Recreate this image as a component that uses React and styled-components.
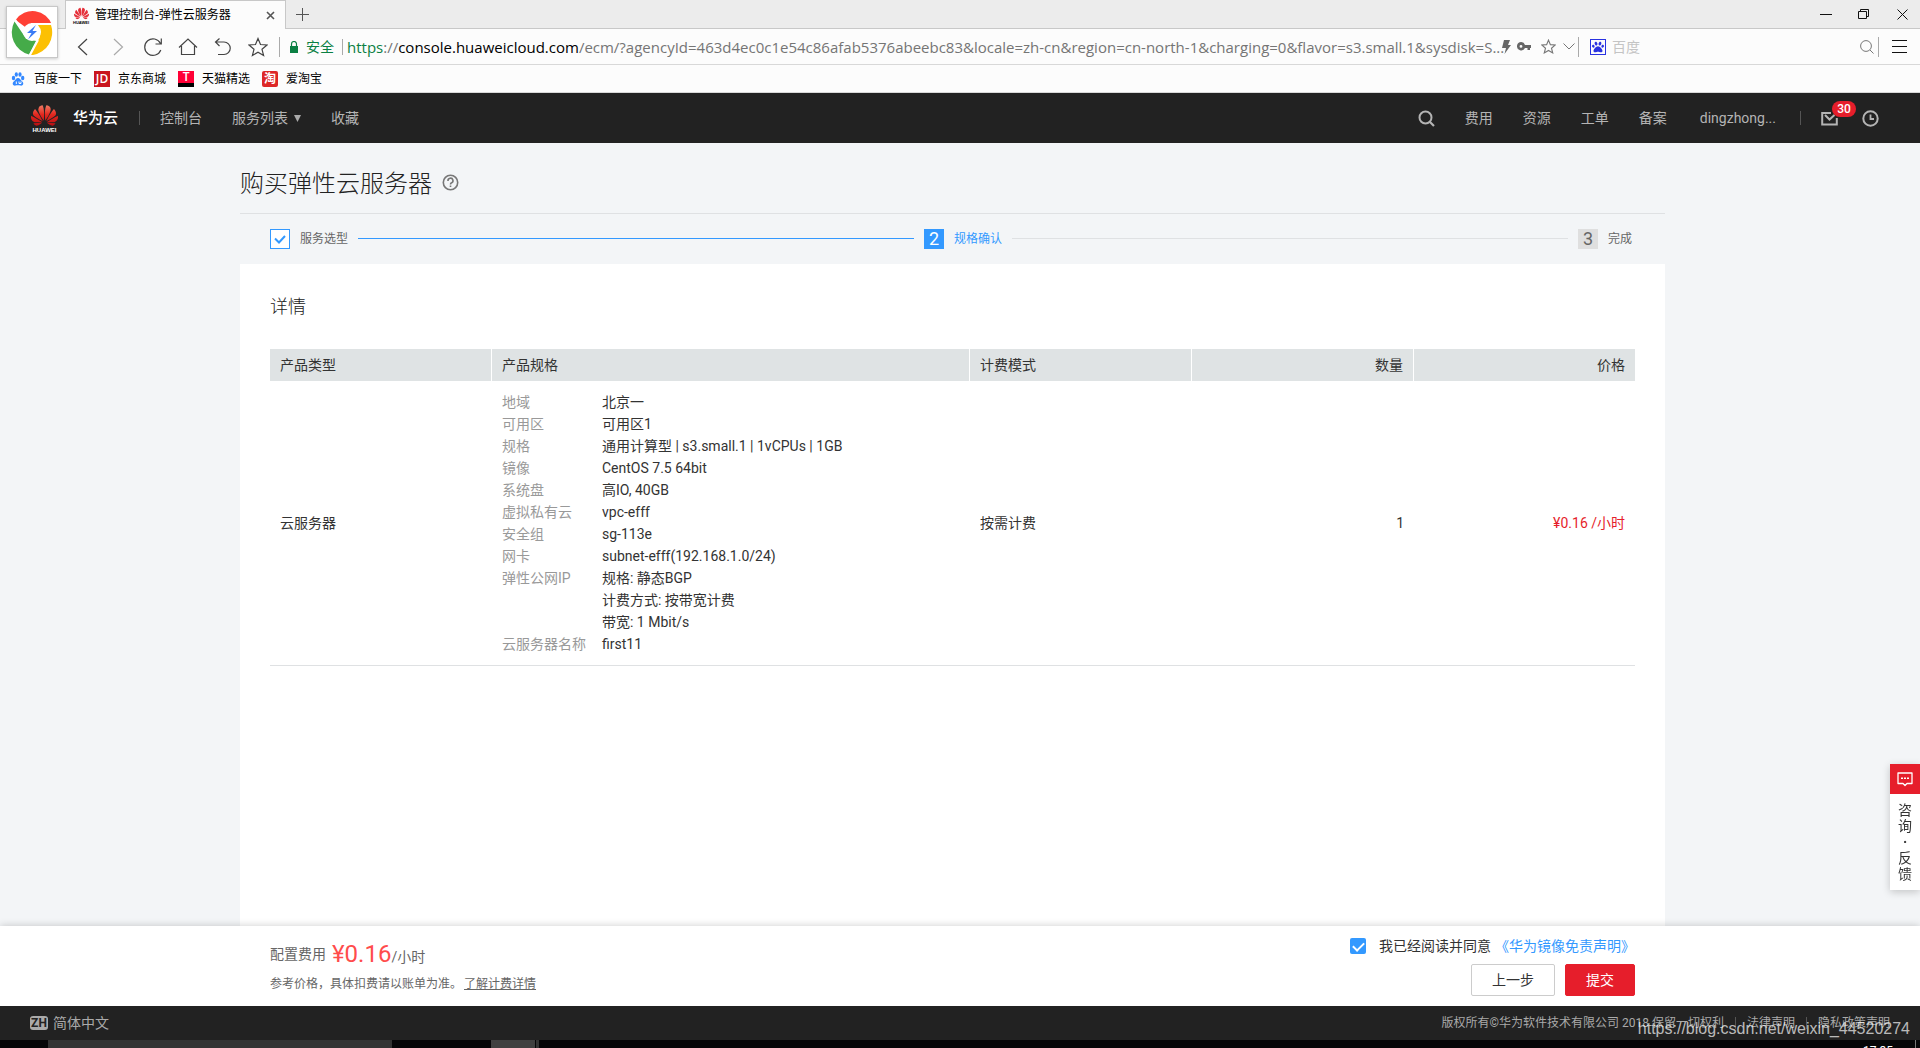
import styled, { createGlobalStyle } from 'styled-components'
import { SiHuawei } from 'react-icons/si'
import { FaPaw } from 'react-icons/fa'

const specs = [
  { name: '地域', value: '北京一' },
  { name: '可用区', value: '可用区1' },
  { name: '规格', value: '通用计算型 | s3.small.1 | 1vCPUs | 1GB' },
  { name: '镜像', value: 'CentOS 7.5 64bit' },
  { name: '系统盘', value: '高IO, 40GB' },
  { name: '虚拟私有云', value: 'vpc-efff' },
  { name: '安全组', value: 'sg-113e' },
  { name: '网卡', value: 'subnet-efff(192.168.1.0/24)' },
  { name: '弹性公网IP', value: '规格: 静态BGP' },
  { name: '', value: '计费方式: 按带宽计费' },
  { name: '', value: '带宽: 1 Mbit/s' },
  { name: '云服务器名称', value: 'first11' },
]

const BrowserLogo = () => (
  <LogoBox>
    <svg width="46" height="46" viewBox="0 0 46 46">
      <path d="M23 23 L6.6 11 A20.5 20.5 0 0 1 43 16 L23 16 Z" fill="#ff4035" />
      <path d="M42 16 A23 23 0 0 1 24 46 L21 46 L31 28 L29 16 Z" fill="#fcc003" />
      <path d="M5.5 12.500 A23 23 0 0 0 20 45.600 L27 32 L16 28 Z" fill="#45ab49" />
      <path d="M22 15 L43.500 15 M16 25 L6 10.500 M29 31 L21 46" stroke="#fff" strokeWidth="2" />
      <circle cx="23" cy="23" r="9" fill="#fff" />
      <path d="M27 16 L18 24 h4.500 L19 30.500 L28 22 h-4.500 Z" fill="#3b7bf5" />
    </svg>
  </LogoBox>
)

const BrowserBar = () => (
  <Browser>
    <TabStrip>
      <Tab>
        <Favicon>
          <SiHuawei size={15} color="#e5303a" />
          <small>HUAWEI</small>
        </Favicon>
        <TabTitle>管理控制台-弹性云服务器</TabTitle>
        <IconButton $w={16} aria-label="close tab">
          <svg width="9" height="9" viewBox="0 0 9 9"><path d="M1 1 L8 8 M8 1 L1 8" stroke="#555" strokeWidth="1.600" /></svg>
        </IconButton>
      </Tab>
      <IconButton $w={32} aria-label="new tab">
        <svg width="13" height="13" viewBox="0 0 13 13"><path d="M6.500 0 V13 M0 6.500 H13" stroke="#555" /></svg>
      </IconButton>
      <WindowButtons>
        <IconButton $w={36} aria-label="minimize">
          <svg width="12" height="12" viewBox="0 0 12 12"><path d="M0 6.500 H12" stroke="#111" /></svg>
        </IconButton>
        <IconButton $w={40} aria-label="restore">
          <svg width="12" height="12" viewBox="0 0 12 12"><path d="M.5 3.500 H8.500 V10.500 H.5 Z M2.500 3.500 V1.500 H10.500 V8.500 H8.500" fill="none" stroke="#111" /></svg>
        </IconButton>
        <IconButton $w={36} aria-label="close">
          <svg width="11" height="11" viewBox="0 0 11 11"><path d="M.5 .5 L10.500 10.500 M10.500 .5 L.5 10.500" stroke="#111" /></svg>
        </IconButton>
      </WindowButtons>
    </TabStrip>
    <Toolbar>
      <NavButtons>
        <IconButton $w={35} aria-label="back">
          <svg width="20" height="20" viewBox="0 0 20 20"><path d="M14 2 L5.500 10 L14 18" fill="none" stroke="#444" strokeWidth="1.200" /></svg>
        </IconButton>
        <IconButton $w={35} aria-label="forward">
          <svg width="20" height="20" viewBox="0 0 20 20"><path d="M6 2 L14.500 10 L6 18" fill="none" stroke="#aaa" strokeWidth="1.200" /></svg>
        </IconButton>
        <IconButton $w={35} aria-label="reload">
          <svg width="20" height="20" viewBox="0 0 20 20"><path d="M17.800 13 A8.300 8.300 0 1 1 17.500 6.500 M18.300 1.500 V7 H12.500" fill="none" stroke="#444" strokeWidth="1.200" /></svg>
        </IconButton>
        <IconButton $w={35} aria-label="home">
          <svg width="20" height="20" viewBox="0 0 20 20"><path d="M1 10.500 L10 2 L19 10.500 M3.500 9 V17.500 H16.500 V9" fill="none" stroke="#444" strokeWidth="1.200" /></svg>
        </IconButton>
        <IconButton $w={35} aria-label="undo">
          <svg width="20" height="20" viewBox="0 0 20 20"><path d="M6.500 1.500 L2.500 5 L6.500 9 M2.500 5 H11 A6 6 0 0 1 11 17.500 H5" fill="none" stroke="#444" strokeWidth="1.200" /></svg>
        </IconButton>
        <IconButton $w={35} aria-label="favorite">
          <svg width="20" height="20" viewBox="0 0 20 20"><path d="M10 1.500 L12.500 7.500 L19 8 L14 12.300 L15.600 18.500 L10 15.200 L4.400 18.500 L6 12.300 L1 8 L7.500 7.500 Z" fill="none" stroke="#444" strokeWidth="1.200" /></svg>
        </IconButton>
      </NavButtons>
      <Divider $h={20} />
      <Secure>
        <svg width="8" height="12" viewBox="0 0 8 12"><path d="M0 5 H8 V12 H0 Z" fill="#0b8043" /><path d="M1.500 5.500 V3 A2.500 2.500 0 0 1 6.500 3 V5.500" fill="none" stroke="#0b8043" strokeWidth="1.200" /></svg>
        安全
      </Secure>
      <Divider $h={16} />
      <Address>
        <b>https</b>://<i>console.huaweicloud.com</i>/ecm/?agencyId=463d4ec0c1e54c86afab5376abeebc83&amp;locale=zh-cn&amp;region=cn-north-1&amp;charging=0&amp;flavor=s3.small.1&amp;sysdisk=S...
      </Address>
      <IconButton $w={12} aria-label="speed mode">
        <svg width="9" height="14" viewBox="0 0 9 14"><path d="M2 0 H8 L6 5 H9 L2.500 14 L4 8 H0 Z" fill="#666" /></svg>
      </IconButton>
      <IconButton $w={24} aria-label="passwords">
        <svg width="14" height="9" viewBox="0 0 14 9"><path d="M4.200 0 A4.200 4.200 0 1 0 8 6 H10.500 V8 H13 V6 H14 V3 H8 A4.200 4.200 0 0 0 4.200 0 Z M4 3 A1.300 1.300 0 1 1 4 5.800 A1.300 1.300 0 1 1 4 3 Z" fill="#666" fillRule="evenodd" /></svg>
      </IconButton>
      <IconButton $w={24} aria-label="add bookmark">
        <svg width="15" height="15" viewBox="0 0 20 20"><path d="M10 1.500 L12.500 7.500 L19 8 L14 12.300 L15.600 18.500 L10 15.200 L4.400 18.500 L6 12.300 L1 8 L7.500 7.500 Z" fill="none" stroke="#777" strokeWidth="1.500" /></svg>
      </IconButton>
      <IconButton $w={18} aria-label="show history">
        <svg width="12" height="7" viewBox="0 0 12 7"><path d="M.5 .5 L6 6 L11.500 .5" fill="none" stroke="#777" /></svg>
      </IconButton>
      <Divider $h={20} />
      <SearchEngine><FaPaw size={12} /></SearchEngine>
      <SearchInput placeholder="百度" aria-label="百度" />
      <IconButton $w={22} aria-label="search">
        <svg width="14" height="14" viewBox="0 0 14 14"><circle cx="6" cy="6" r="5.400" fill="none" stroke="#777" /><path d="M10 10 L13.500 13.500" stroke="#777" /></svg>
      </IconButton>
      <Divider $h={20} />
      <IconButton $w={41} aria-label="menu">
        <svg width="15" height="13" viewBox="0 0 15 13"><path d="M0 .5 H15 M0 6.500 H15 M0 12.500 H15" stroke="#111" /></svg>
      </IconButton>
    </Toolbar>
    <Bookmarks>
      <Bookmark href="#">
        <svg width="16" height="16" viewBox="0 0 16 16" fill="#3388ff">
          <ellipse cx="3.500" cy="7" rx="1.700" ry="2.200" /><ellipse cx="6.300" cy="3.500" rx="1.600" ry="2.200" />
          <ellipse cx="10" cy="3.500" rx="1.600" ry="2.200" /><ellipse cx="12.700" cy="7" rx="1.700" ry="2.200" />
          <path d="M8 7 C10 7 10.500 9 12 10.300 C14.500 12.500 13 15 10.500 14.600 C8.500 14.200 7.500 14.200 5.500 14.600 C3 15 1.500 12.500 4 10.300 C5.500 9 6 7 8 7 Z" />
          <path d="M6.300 10.500 V13 M9 10.500 V12.500 H11 V10.500" stroke="#fff" fill="none" />
        </svg>
        百度一下
      </Bookmark>
      <Bookmark href="#"><SiteMark $bg="#c9151e">JD</SiteMark>京东商城</Bookmark>
      <Bookmark href="#"><SiteMark $bg="#ff0036" $foot>T</SiteMark>天猫精选</Bookmark>
      <Bookmark href="#"><SiteMark $bg="#dd2727" $round>淘</SiteMark>爱淘宝</Bookmark>
    </Bookmarks>
    <BrowserLogo />
  </Browser>
)

const ConsoleHeader = () => (
  <Header>
    <Brand href="#">
      <BrandMark>
        <Gradients>
          <defs>
            <linearGradient id="petal" x1="0" y1="0" x2="0" y2="1">
              <stop offset="0" stopColor="#ee7a63" />
              <stop offset="0.450" stopColor="#e3281f" />
              <stop offset="1" stopColor="#b80f12" />
            </linearGradient>
          </defs>
        </Gradients>
        <SiHuawei size={27} />
        <small>HUAWEI</small>
      </BrandMark>
      华为云
    </Brand>
    <Divider $h={14} $dark />
    <MainNav>
      <NavLink href="#">控制台</NavLink>
      <NavLink href="#">
        服务列表
        <svg width="7" height="7" viewBox="0 0 7 7"><path d="M0 0 H7 L3.500 7 Z" fill="#aaa" /></svg>
      </NavLink>
      <NavLink href="#">收藏</NavLink>
    </MainNav>
    <UserNav>
      <HeaderIcon aria-label="搜索">
        <svg width="17" height="17" viewBox="0 0 17 17"><circle cx="7.500" cy="7.500" r="6" fill="none" stroke="#b4b4b4" strokeWidth="2" /><path d="M11.500 11.500 L16 16" stroke="#b4b4b4" strokeWidth="2.200" /></svg>
      </HeaderIcon>
      <NavLink href="#">费用</NavLink>
      <NavLink href="#">资源</NavLink>
      <NavLink href="#">工单</NavLink>
      <NavLink href="#">备案</NavLink>
    </UserNav>
    <UserName href="#">dingzhong...</UserName>
    <Divider $h={14} $dark />
    <HeaderIcon aria-label="消息">
      <svg width="17" height="17" viewBox="0 0 17 17"><path d="M10 3 H1.200 V14.500 H15.800 V8 M4 5 L8.500 9.500 L13.500 5" fill="none" stroke="#b4b4b4" strokeWidth="2" /></svg>
      <Badge>30</Badge>
    </HeaderIcon>
    <HeaderIcon aria-label="最近访问">
      <svg width="17" height="17" viewBox="0 0 17 17"><circle cx="8.500" cy="8.500" r="7.200" fill="none" stroke="#b4b4b4" strokeWidth="2" /><path d="M8.500 4.500 V9 H12" fill="none" stroke="#b4b4b4" strokeWidth="1.800" /></svg>
    </HeaderIcon>
  </Header>
)

const Steps = () => (
  <StepList>
    <Step>
      <StepBox $state="done">
        <svg width="12" height="9" viewBox="0 0 12 9"><path d="M1 3.500 L5 7.500 L11 1" fill="none" stroke="#3399ff" strokeWidth="2" /></svg>
      </StepBox>
      服务选型
    </Step>
    <StepLine $active />
    <Step $active><StepBox $state="active">2</StepBox>规格确认</Step>
    <StepLine />
    <Step><StepBox>3</StepBox>完成</Step>
  </StepList>
)

const DetailTable = () => (
  <Table>
    <colgroup>
      <Col $w="222px" />
      <Col />
      <Col $w="222px" />
      <Col $w="222px" />
      <Col $w="221px" />
    </colgroup>
    <thead>
      <tr>
        <Th>产品类型</Th>
        <Th>产品规格</Th>
        <Th>计费模式</Th>
        <Th $right>数量</Th>
        <Th $right>价格</Th>
      </tr>
    </thead>
    <tbody>
      <tr>
        <Td>云服务器</Td>
        <Td>
          <SpecList>
            {specs.map((el) => (
              <SpecRow key={el.value}>
                <SpecName>{el.name}</SpecName>
                <SpecValue>{el.value}</SpecValue>
              </SpecRow>
            ))}
          </SpecList>
        </Td>
        <Td>按需计费</Td>
        <Td $right>1</Td>
        <Td $right $price>¥0.16 /小时</Td>
      </tr>
    </tbody>
  </Table>
)

const SubmitBar = () => (
  <ActionBar>
    <div>
      <CostLine>
        配置费用
        <div><Cost>¥0.16</Cost>/小时</div>
      </CostLine>
      <CostNote>参考价格，具体扣费请以账单为准。<a href="#">了解计费详情</a></CostNote>
    </div>
    <Actions>
      <Agreement>
        <Checkbox type="checkbox" id="agree" defaultChecked />
        <label htmlFor="agree">我已经阅读并同意</label>
        <a href="#">《华为镜像免责声明》</a>
      </Agreement>
      <Buttons>
        <Button $w={84}>上一步</Button>
        <Button $w={70} $primary>提交</Button>
      </Buttons>
    </Actions>
  </ActionBar>
)

const PageFooter = () => (
  <Footer>
    <Language><span>ZH</span>简体中文</Language>
    <Legal>
      版权所有©华为软件技术有限公司 2018 保留一切权利
      <Divider $h={12} $dark />
      <a href="#">法律声明</a>
      <Divider $h={12} $dark />
      <a href="#">隐私政策声明</a>
    </Legal>
    <Watermark>https://blog.csdn.net/weixin_44520274</Watermark>
  </Footer>
)

const Feedback = () => (
  <FeedbackBox>
    <FeedbackButton aria-label="咨询">
      <svg width="16" height="15" viewBox="0 0 16 15"><path d="M1 1 H15 V11.500 H10 L8 13.500 L6 11.500 H1 Z" fill="none" stroke="#fff" strokeWidth="1.300" strokeLinejoin="round" /><path d="M4 6.200 h2 M7 6.200 h2 M10 6.200 h2" stroke="#fff" strokeWidth="1.500" /></svg>
    </FeedbackButton>
    <FeedbackText>
      <span>咨</span><span>询</span><b>·</b><span>反</span><span>馈</span>
    </FeedbackText>
  </FeedbackBox>
)

export default function App() {
  return (
    <Page>
      <GlobalStyle />
      <BrowserBar />
      <ConsoleHeader />
      <Main>
        <TitleRow>
          <h1>购买弹性云服务器</h1>
          <svg width="17" height="17" viewBox="0 0 17 17"><circle cx="8.500" cy="8.500" r="7.200" fill="none" stroke="#777" strokeWidth="1.600" /><path d="M6 7 A2.500 2.500 0 1 1 9.300 9 Q8.500 9.400 8.500 10.500 M8.500 11.500 V13" fill="none" stroke="#777" strokeWidth="1.600" /></svg>
        </TitleRow>
        <Steps />
        <Panel>
          <h2>详情</h2>
          <DetailTable />
        </Panel>
      </Main>
      <SubmitBar />
      <PageFooter />
      <Taskbar>
        <TaskItem $left={48} $w={344} $bg="#333" />
        <TaskItem $left={99} $w={44} $bg="#404040" />
        <TaskItem $left={1} $w={3} $bg="#333" />
        <Clock>17:35</Clock>
      </Taskbar>
      <Feedback />
    </Page>
  )
}

const GlobalStyle = createGlobalStyle`
  * {
    box-sizing: border-box;
  }
  body {
    margin: 0;
    color: #333;
    font-family: Roboto, "Noto Sans CJK SC", sans-serif;
    font-size: 14px;
    line-height: 22px;
  }
  button, input {
    font: inherit;
    color: inherit;
  }
  a {
    color: inherit;
    text-decoration: none;
  }
  svg {
    flex: none;
    display: block;
  }
`

const Page = styled.div`
  display: flex;
  flex-direction: column;
  min-height: 100vh;
  background: #f3f5f7;
`

const Browser = styled.div`
  position: relative;
  background: #fcfcfc;
  color: #000;
  font-family: "Open Sans", "Noto Sans CJK SC", sans-serif;
`
const LogoBox = styled.div`
  position: absolute;
  left: 6px;
  top: 6px;
  display: flex;
  align-items: center;
  justify-content: center;
  width: 52px;
  height: 52px;
  background: #fff;
  border: 1px solid #c8c8c8;
  box-shadow: 0 1px 3px rgba(0, 0, 0, 0.2);
`
const TabStrip = styled.div`
  display: flex;
  align-items: center;
  height: 29px;
  padding-left: 65px;
  background: #ececec;
  border-bottom: 1px solid #c8c8c8;
`
const Tab = styled.div`
  display: flex;
  align-items: center;
  align-self: stretch;
  width: 221px;
  margin-bottom: -1px;
  padding: 0 7px;
  background: #fcfcfc;
  border: 1px solid #c8c8c8;
  border-bottom: 0;
`
const Favicon = styled.span`
  display: flex;
  flex-direction: column;
  align-items: center;
  width: 16px;
  small {
    font: bold 4px/3px "Liberation Sans", sans-serif;
  }
`
const TabTitle = styled.span`
  flex: 1;
  margin-left: 6px;
  font-size: 12px;
`
const IconButton = styled.button`
  display: flex;
  align-items: center;
  justify-content: center;
  flex: none;
  width: ${({ $w }) => $w}px;
  height: 24px;
  padding: 0;
  background: none;
  border: 0;
`
const WindowButtons = styled.div`
  display: flex;
  margin-left: auto;
`
const Toolbar = styled.div`
  display: flex;
  align-items: center;
  height: 36px;
  padding-left: 65px;
  border-bottom: 1px solid #d8d8d8;
`
const NavButtons = styled.div`
  display: flex;
  padding-right: 4px;
`
const Divider = styled.span`
  flex: none;
  width: 1px;
  height: ${({ $h }) => $h}px;
  background: ${({ $dark }) => ($dark ? '#555' : '#aaa')};
`
const Secure = styled.span`
  display: flex;
  align-items: center;
  flex: none;
  gap: 8px;
  padding: 0 8px 0 10px;
  color: #0b8043;
`
const Address = styled.div`
  flex: 1;
  min-width: 0;
  padding-left: 4px;
  white-space: nowrap;
  color: #757575;
  font-size: 15px;
  b {
    color: #0b8043;
    font-weight: 400;
  }
  i {
    color: #000;
    font-style: normal;
  }
`
const SearchEngine = styled.span`
  display: flex;
  align-items: center;
  justify-content: center;
  width: 16px;
  height: 16px;
  margin-left: 11px;
  border: 1px solid #2932e1;
  color: #2932e1;
`
const SearchInput = styled.input`
  width: 250px;
  padding: 0 6px;
  background: none;
  border: 0;
  outline: 0;
  &::placeholder {
    color: #c4c4c4;
  }
`
const Bookmarks = styled.div`
  display: flex;
  align-items: center;
  gap: 12px;
  height: 28px;
  padding-left: 10px;
  border-bottom: 1px solid #d8d8d8;
`
const Bookmark = styled.a`
  display: flex;
  align-items: center;
  gap: 8px;
  font-size: 12px;
`
const SiteMark = styled.span`
  width: 16px;
  height: 16px;
  background: ${({ $bg }) => $bg};
  border-bottom: ${({ $foot }) => ($foot ? '4px solid #000' : '0')};
  border-radius: ${({ $round }) => ($round ? '2px' : '0')};
  color: #fff;
  font-size: 12px;
  font-weight: 600;
  line-height: ${({ $foot }) => ($foot ? '12px' : '16px')};
  text-align: center;
`

const Header = styled.header`
  display: flex;
  align-items: center;
  height: 50px;
  padding: 0 41px 0 31px;
  background: #222;
  color: #b4b4b4;
`
const Brand = styled.a`
  display: flex;
  align-items: center;
  gap: 15px;
  margin-right: 21px;
  color: #fff;
  font-size: 15px;
  font-weight: 500;
`
const BrandMark = styled.span`
  display: flex;
  flex-direction: column;
  align-items: center;
  justify-content: center;
  width: 27px;
  path {
    fill: url(#petal);
  }
  small {
    margin-top: -3px;
    font: bold 6px/8px "Liberation Sans", sans-serif;
  }
`
const Gradients = styled.svg`
  width: 0;
  height: 0;
`
const MainNav = styled.nav`
  display: flex;
  gap: 30px;
  margin-left: 20px;
`
const NavLink = styled.a`
  display: flex;
  align-items: center;
  gap: 6px;
`
const UserNav = styled.nav`
  display: flex;
  align-items: center;
  gap: 30px;
  margin-left: auto;
`
const UserName = styled.a`
  margin: 0 24px 0 33px;
`
const HeaderIcon = styled.button`
  position: relative;
  padding: 0;
  background: none;
  border: 0;
  ${Divider} + & {
    margin: 0 24px 0 20px;
  }
`
const Badge = styled.span`
  position: absolute;
  left: 11px;
  top: -9px;
  width: 24px;
  border-radius: 8px;
  background: #e61e2b;
  color: #fff;
  font-size: 12px;
  font-weight: 500;
  line-height: 16px;
`

const Main = styled.main`
  flex: 1;
  display: flex;
  flex-direction: column;
  padding: 0 255px 0 240px;
`
const TitleRow = styled.div`
  display: flex;
  align-items: center;
  gap: 10px;
  height: 71px;
  padding-top: 8px;
  border-bottom: 1px solid #dfe1e3;
  h1 {
    margin: 0;
    padding-top: 4px;
    color: #222;
    font-size: 24px;
    font-weight: 300;
    line-height: 36px;
  }
`
const StepList = styled.ol`
  display: flex;
  align-items: center;
  gap: 10px;
  height: 50px;
  margin: 0;
  padding: 0 33px 0 30px;
  list-style: none;
`
const Step = styled.li`
  display: flex;
  align-items: center;
  gap: 10px;
  color: ${({ $active }) => ($active ? '#3399ff' : '#666')};
  font-size: 12px;
`
const StepBox = styled.span`
  display: flex;
  align-items: center;
  justify-content: center;
  width: 20px;
  height: 20px;
  border: 1px solid ${({ $state }) => ($state ? '#3399ff' : '#dfdfdf')};
  background: ${({ $state }) => ($state === 'done' ? '#fff' : $state === 'active' ? '#3399ff' : '#dfdfdf')};
  color: ${({ $state }) => ($state === 'active' ? '#fff' : '#666')};
  font-size: 18px;
`
const StepLine = styled.li`
  flex: 1;
  height: 1px;
  margin-bottom: 1px;
  background: ${({ $active }) => ($active ? '#3399ff' : '#dfe1e3')};
`
const Panel = styled.section`
  flex: 1;
  padding: 30px;
  background: #fff;
  h2 {
    margin: 0 0 29px;
    color: #222;
    font-size: 18px;
    font-weight: 300;
    line-height: 26px;
  }
`
const Table = styled.table`
  width: 100%;
  table-layout: fixed;
  border-collapse: separate;
  border-spacing: 0;
`
const Col = styled.col`
  width: ${({ $w }) => $w || 'auto'};
`
const Th = styled.th`
  height: 32px;
  padding: 0 10px;
  background: #dfe3e4;
  border-right: 1px solid #fff;
  font-weight: 400;
  text-align: ${({ $right }) => ($right ? 'right' : 'left')};
  &:last-child {
    border-right: 0;
  }
`
const Td = styled.td`
  padding: 10px;
  border-bottom: 1px solid #dfe1e3;
  color: ${({ $price }) => ($price ? '#e61e2b' : '#333')};
  text-align: ${({ $right }) => ($right ? 'right' : 'left')};
`
const SpecList = styled.dl`
  margin: 0;
`
const SpecRow = styled.div`
  display: flex;
`
const SpecName = styled.dt`
  width: 100px;
  color: #999;
`
const SpecValue = styled.dd`
  margin: 0;
`

const ActionBar = styled.div`
  display: flex;
  justify-content: space-between;
  height: 80px;
  padding: 10px 285px 10px 270px;
  background: #fff;
  box-shadow: 0 0 8px rgba(0, 0, 0, 0.2);
  a {
    color: #3399ff;
  }
`
const CostLine = styled.div`
  display: flex;
  align-items: flex-start;
  gap: 6px;
  color: #666;
  line-height: 36px;
`
const Cost = styled.span`
  color: #ff4c4c;
  font-size: 24px;
`
const CostNote = styled.div`
  color: #666;
  font-size: 12px;
  line-height: 18px;
  a {
    margin-left: 2px;
    color: #666;
    text-decoration: underline;
  }
`
const Actions = styled.div`
  display: flex;
  flex-direction: column;
  align-items: flex-end;
  gap: 8px;
`
const Agreement = styled.div`
  display: flex;
  align-items: center;
  line-height: 20px;
  label {
    margin: 0 4px 0 13px;
  }
`
const Checkbox = styled.input`
  appearance: none;
  display: flex;
  align-items: center;
  justify-content: center;
  width: 16px;
  height: 16px;
  margin: 0;
  border-radius: 2px;
  background: #3399ff;
  &:checked::after {
    content: "";
    width: 9px;
    height: 5px;
    margin-bottom: 2px;
    border: solid #fff;
    border-width: 0 0 2px 2px;
    transform: rotate(-45deg);
  }
`
const Buttons = styled.div`
  display: flex;
  gap: 10px;
`
const Button = styled.button`
  width: ${({ $w }) => $w}px;
  height: 32px;
  padding: 0;
  border: 1px solid ${({ $primary }) => ($primary ? '#e61e2b' : '#ccc')};
  border-radius: 2px;
  background: ${({ $primary }) => ($primary ? '#e61e2b' : '#fff')};
  color: ${({ $primary }) => ($primary ? '#fff' : '#333')};
`

const Footer = styled.footer`
  position: relative;
  display: flex;
  align-items: center;
  justify-content: space-between;
  height: 34px;
  padding: 0 30px;
  background: #222;
  color: #aaa;
`
const Language = styled.div`
  display: flex;
  align-items: center;
  gap: 5px;
  span {
    width: 18px;
    border-radius: 3px;
    background: #aaa;
    color: #222;
    font-size: 12px;
    font-weight: 700;
    line-height: 14px;
    text-align: center;
  }
`
const Legal = styled.div`
  display: flex;
  align-items: center;
  gap: 11px;
  font-size: 12px;
`
const Watermark = styled.span`
  position: absolute;
  right: 10px;
  top: 12px;
  color: rgba(255, 255, 255, 0.7);
  font-family: "Liberation Sans", sans-serif;
  font-size: 16px;
`
const Taskbar = styled.div`
  display: flex;
  height: 8px;
  overflow: hidden;
  background: #060608;
`
const TaskItem = styled.span`
  width: ${({ $w }) => $w}px;
  margin-left: ${({ $left }) => $left}px;
  background: ${({ $bg }) => $bg};
`
const Clock = styled.span`
  height: 20px;
  margin-left: auto;
  margin-right: 4px;
  padding: 4px 22px 0 0;
  border-right: 1px solid #777;
  color: #fff;
  font-size: 12px;
  line-height: 15px;
`

const FeedbackBox = styled.aside`
  position: fixed;
  right: 0;
  bottom: 158px;
  width: 30px;
  background: #fff;
  box-shadow: 0 2px 8px rgba(0, 0, 0, 0.2);
`
const FeedbackButton = styled.button`
  display: flex;
  align-items: center;
  justify-content: center;
  width: 30px;
  height: 30px;
  padding: 0;
  border: 0;
  background: #e61e2b;
`
const FeedbackText = styled.div`
  display: flex;
  flex-direction: column;
  align-items: center;
  padding: 8px 0;
  line-height: 16px;
`
